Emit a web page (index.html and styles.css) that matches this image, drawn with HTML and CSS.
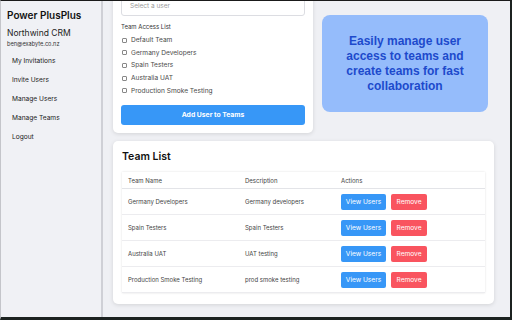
FILE: index.html
```html
<!DOCTYPE html>
<html>
<head>
<meta charset="utf-8">
<link rel="stylesheet" href="styles.css">
</head>
<body>
<div class="frame">
  <aside class="sidebar">
    <div class="brand">Power PlusPlus</div>
    <div class="org">Northwind CRM</div>
    <div class="email">ben@exabyte.co.nz</div>
    <nav class="nav">
      <a>My Invitations</a>
      <a>Invite Users</a>
      <a>Manage Users</a>
      <a>Manage Teams</a>
      <a>Logout</a>
    </nav>
  </aside>
  <main class="main">
    <div class="scroll">
      <div class="top-row">
        <section class="card form-card">
          <div class="select">Select a user</div>
          <div class="label">Team Access List</div>
          <ul class="checks">
            <li><span class="box"></span>Default Team</li>
            <li><span class="box"></span>Germany Developers</li>
            <li><span class="box"></span>Spain Testers</li>
            <li><span class="box"></span>Australia UAT</li>
            <li><span class="box"></span>Production Smoke Testing</li>
          </ul>
          <button class="primary">Add User to Teams</button>
        </section>
        <div class="callout">Easily manage user access to teams and create teams for fast collaboration</div>
      </div>
      <section class="card list-card">
        <h2>Team List</h2>
        <table class="teams">
          <thead>
            <tr><th class="c1">Team Name</th><th class="c2">Description</th><th>Actions</th></tr>
          </thead>
          <tbody>
            <tr><td>Germany Developers</td><td>Germany developers</td><td><span class="btn view">View Users</span><span class="btn remove">Remove</span></td></tr>
            <tr><td>Spain Testers</td><td>Spain Testers</td><td><span class="btn view">View Users</span><span class="btn remove">Remove</span></td></tr>
            <tr><td>Australia UAT</td><td>UAT testing</td><td><span class="btn view">View Users</span><span class="btn remove">Remove</span></td></tr>
            <tr><td>Production Smoke Testing</td><td>prod smoke testing</td><td><span class="btn view">View Users</span><span class="btn remove">Remove</span></td></tr>
          </tbody>
        </table>
      </section>
    </div>
  </main>
</div>
</body>
</html>
```

FILE: styles.css
```css
* { box-sizing: border-box; }
html, body { margin: 0; padding: 0; }
body {
  width: 512px;
  height: 320px;
  overflow: hidden;
  font-family: Inter, "Liberation Sans", sans-serif;
  color: #222;
  background: #1c1f1e;
}
.frame {
  width: 512px;
  height: 320px;
  display: flex;
  border-top: 1px solid #1a1a1a;
  border-bottom: 3px solid #1c2220;
  border-right: 2px solid #1c2220;
  border-left: 1px solid #c4c5ca;
  background: #eff0f4;
}
.sidebar {
  width: 102px;
  flex: none;
  background: #f0f1f5;
  border-right: 2px solid #cfd0d6;
  padding: 7px 0 0 6px;
}
.brand {
  font-size: 10px;
  font-weight: 600;
  color: #111;
  line-height: 14px;
}
.org {
  margin-top: 5px;
  font-size: 8.5px;
  line-height: 12px;
  color: #222;
}
.email {
  margin-top: 1px;
  font-size: 5.6px;
  line-height: 8px;
  color: #333;
}
.nav {
  display: flex;
  flex-direction: column;
  margin-top: 4px;
  padding-left: 5px;
}
.nav a {
  font-size: 6.6px;
  line-height: 19px;
  height: 19px;
  color: #222;
}
.main {
  flex: 1;
  overflow: hidden;
  padding: 0 14px 0 10px;
}
.scroll {
  margin-top: -14px;
}
.top-row {
  display: flex;
  align-items: flex-start;
  gap: 9px;
}
.card {
  background: #fff;
  border-radius: 5px;
  box-shadow: 0 1px 4px rgba(0,0,0,0.12);
}
.form-card {
  width: 200px;
  padding: 8px 8px 8px 8px;
}
.select {
  height: 21px;
  border: 1px solid #dcdde2;
  border-radius: 3px;
  font-size: 6.5px;
  color: #9a9a9a;
  padding: 6px 8px 0;
}
.label {
  margin-top: 7px;
  font-size: 6px;
  line-height: 8px;
  color: #333;
}
.checks {
  list-style: none;
  margin: 3px 0 0;
  padding: 0 0 0 1px;
}
.checks li {
  display: flex;
  align-items: center;
  height: 12.6px;
  font-size: 6.6px;
  color: #4a4a4a;
}
.box {
  width: 5px;
  height: 5px;
  border: 0.8px solid #888;
  border-radius: 1px;
  margin-right: 4px;
  flex: none;
}
.primary {
  display: block;
  width: 100%;
  height: 20px;
  margin-top: 8px;
  border: none;
  border-radius: 3px;
  background: #3797f7;
  color: #fff;
  font-family: Inter, "Liberation Sans", sans-serif;
  font-size: 6.8px;
  font-weight: 700;
}
.callout {
  width: 166px;
  height: 97px;
  margin-top: 28px;
  background: #95bcfb;
  border-radius: 8px;
  color: #1d4acc;
  font-family: "Liberation Sans", Arial, sans-serif;
  font-weight: 700;
  font-size: 12px;
  line-height: 15px;
  text-align: center;
  padding: 19px 14px 0;
}
.list-card {
  margin-top: 8px;
  width: 381px;
  padding: 9px 9px 11px;
}
.list-card h2 {
  margin: 0 0 9px 0;
  font-size: 10.5px;
  line-height: 13px;
  font-weight: 600;
  color: #111;
}
.teams {
  width: 100%;
  border-collapse: collapse;
  box-shadow: 0 0 2px rgba(0,0,0,0.12);
  font-size: 6px;
  color: #444;
}
.teams th {
  text-align: left;
  font-weight: 400;
  height: 17px;
  padding: 0 6px;
  border-bottom: 1.5px solid #e3e4e8;
}
.teams th.c1 { width: 117px; }
.teams th.c2 { width: 96px; }
.teams td {
  height: 26px;
  padding: 0 6px;
  border-bottom: 1px solid #ececef;
  white-space: nowrap;
}
.btn {
  display: inline-block;
  height: 16px;
  line-height: 16px;
  border-radius: 2px;
  color: #fff;
  font-size: 6.6px;
  text-align: center;
  vertical-align: middle;
}
.view { width: 45px; background: #3797f7; }
.remove { width: 36px; background: #f9545f; margin-left: 5px; }
```
